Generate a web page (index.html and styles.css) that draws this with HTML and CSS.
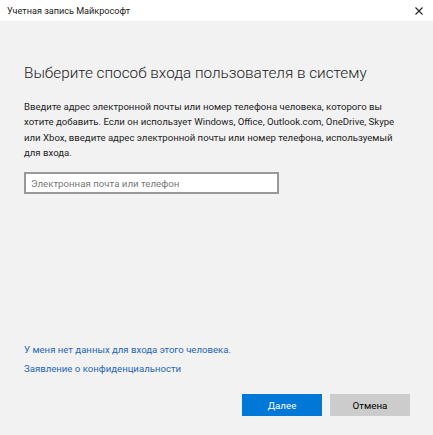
FILE: index.html
```html
<!DOCTYPE html>
<html lang="ru">
<head>
  <meta charset="UTF-8" />
  <title>Учетная запись Майкрософт</title>
  <link rel="stylesheet" href="styles.css">
</head>
<body>
  <div class="window">
    <div class="titlebar">
      <span class="title">Учетная запись Майкрософт</span>
      <span class="close">
        <svg width="8" height="8" viewBox="0 0 8 8"><path d="M0.5 0.5L7.5 7.5M7.5 0.5L0.5 7.5" stroke="#222" stroke-width="1.1" fill="none"/></svg>
      </span>
    </div>

    <div class="content">
      <h1>Выберите способ входа пользователя в систему</h1>
      <p class="intro">Введите адрес электронной почты или номер телефона человека, которого вы хотите добавить. Если он использует Windows, Office, Outlook.com, OneDrive, Skype или Xbox, введите адрес электронной почты или номер телефона, используемый для входа.</p>
      <input type="text" class="field" placeholder="Электронная почта или телефон" />

      <div class="links">
        <a href="#">У меня нет данных для входа этого человека.</a>
        <a href="#">Заявление о конфиденциальности</a>
      </div>

      <div class="actions">
        <button class="btn btn-blue">Далее</button>
        <button class="btn btn-gray">Отмена</button>
      </div>
    </div>
  </div>
</body>
</html>
```

FILE: styles.css
```css
html, body {
  margin: 0;
  height: 100%;
}
body {
  font-family: Roboto, "Noto Sans", sans-serif;
  background-color: #f2f2f2;
  color: #000;
}
.window {
  height: 435px;
  display: flex;
  flex-direction: column;
}
.titlebar {
  height: 21px;
  background-color: #fff;
  display: flex;
  align-items: center;
  justify-content: space-between;
  padding: 0 10px 0 7px;
}
.title {
  font-size: 9.1px;
  color: #222;
}
.close {
  display: flex;
  width: 8px;
  height: 8px;
}
.content {
  flex: 1;
  display: flex;
  flex-direction: column;
  padding: 0 27px 0 24px;
}
h1 {
  font-size: 15.3px;
  font-weight: 300;
  color: #222;
  margin: 39px 0 0;
  line-height: 26px;
}
.intro {
  font-size: 9.6px;
  line-height: 15.3px;
  color: #222;
  margin: 13px 0 0;
}
.field {
  width: 255px;
  height: 22px;
  box-sizing: border-box;
  margin-top: 12px;
  border: 2px solid #999;
  background: #fff;
  padding: 0 5px;
  font-family: inherit;
  font-size: 9.7px;
}
.field::placeholder {
  color: #777;
}
.links {
  margin-top: auto;
  display: flex;
  flex-direction: column;
  gap: 4px;
}
.links a {
  font-size: 9.6px;
  line-height: 15px;
  color: #1e66b4;
  text-decoration: none;
}
.actions {
  display: flex;
  justify-content: flex-end;
  gap: 8px;
  margin: 18px -4px 19px 0;
}
.btn {
  width: 80px;
  height: 22px;
  border: none;
  font-family: inherit;
  font-size: 9.8px;
  padding: 0;
}
.btn-blue {
  background-color: #0078d7;
  color: #fff;
}
.btn-gray {
  background-color: #cccccc;
  color: #000;
}
```
